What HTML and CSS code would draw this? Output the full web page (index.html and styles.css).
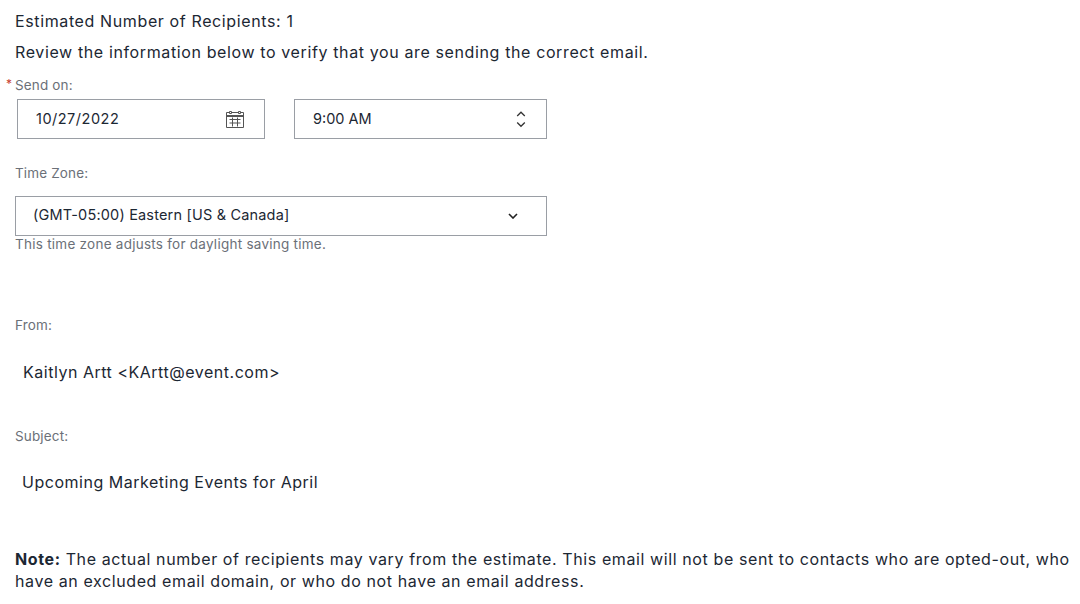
FILE: index.html
```html
<!DOCTYPE html>
<html lang="en">
<head>
<meta charset="utf-8">
<title>Review</title>
<link rel="stylesheet" href="styles.css">
</head>
<body>
<main class="page">
  <p class="line first">Estimated Number of Recipients: 1</p>
  <p class="line second">Review the information below to verify that you are sending the correct email.</p>
  <div class="label send-label"><span class="req">*</span>Send on:</div>
  <div class="row">
    <div class="box date"><span class="field-text date-text">10/27/2022</span>
      <svg class="cal" viewBox="0 0 18 18" width="18" height="18" fill="none" stroke="#555" stroke-width="1"><path d="M.5 2.5h17v15H.5z"/><path d="M.5 5.5h17M.5 6.5h17M3.5 9.5h11M3.5 13h11M6.5 7.5v9M11.5 7.5v9"/><path d="M3.5 1.5h2v2h-2zM12.5 1.5h2v2h-2z" fill="#fff"/></svg>
    </div>
    <div class="box time"><span class="field-text">9:00 AM</span>
      <svg class="updown" viewBox="0 0 10 18" width="10" height="18" fill="none" stroke="#333" stroke-width="1.3"><path d="M1.2 6l3.8-3.800L8.800 6M1.200 12.500l3.800 3.800 3.800-3.800"/></svg>
    </div>
  </div>
  <div class="label tz-label">Time Zone:</div>
  <div class="box zone"><span class="field-text zone-text">(GMT-05:00) Eastern [US &amp; Canada]</span>
    <svg viewBox="0 0 10 6" width="10" height="6" fill="none" stroke="#222" stroke-width="1.6"><path d="M1 1l4 4 4-4"/></svg>
  </div>
  <div class="hint">This time zone adjusts for daylight saving time.</div>
  <div class="label from-label">From:</div>
  <div class="value from-value">Kaitlyn Artt &lt;KArtt@event.com&gt;</div>
  <div class="label subject-label">Subject:</div>
  <div class="value subject-value">Upcoming Marketing Events for April</div>
  <p class="note"><strong>Note:</strong> The actual number of recipients may vary from the estimate. This email will not be sent to contacts who are opted-out, who have an excluded email domain, or who do not have an email address.</p>
</main>
</body>
</html>
```
FILE: styles.css
```css
html, body { margin: 0; padding: 0; background: #fff; }
body { font-family: Inter, "Noto Sans", sans-serif; color: #1c2733; font-size: 16px; overflow: hidden; }
.page { width: 1080px; height: 604px; padding: 0 0 0 15px; box-sizing: border-box; overflow: hidden; }
.line { margin: 0; line-height: 22px; letter-spacing: 0.62px; }
.first { padding-top: 10px; }
.second { padding-top: 9px; }
.label { font-size: 13.5px; line-height: 18px; color: #6b7078; letter-spacing: 0.15px; }
.send-label { margin-top: 13px; position: relative; }
.req { position: absolute; left: -9px; top: -1px; color: #c8402f; font-size: 12px; }
.row { display: flex; gap: 29px; margin: 5px 0 0 2px; }
.box { box-sizing: border-box; height: 40px; border: 1px solid #9a9ea5; display: flex; align-items: center; justify-content: space-between; font-size: 14.5px; }
.field-text { margin-bottom: 2px; }
.date-text { letter-spacing: 0.5px; }
.zone-text { margin-bottom: 4px; letter-spacing: 0.18px; }
.date { width: 248px; padding: 0 20px 0 18px; }
.time { width: 253px; padding: 0 20px 0 18px; }
.zone { width: 532px; padding: 0 28px 0 17px; margin-top: 14px; }
.tz-label { margin-top: 25px; }
.hint { font-size: 13.5px; line-height: 16px; color: #6b7078; letter-spacing: 0.25px; }
.from-label { margin-top: 64px; }
.value { font-size: 16px; line-height: 22px; letter-spacing: 0.52px; }
.from-value { margin: 27px 0 0 8px; }
.subject-label { margin-top: 44px; }
.subject-value { margin: 26px 0 0 7px; }
.note { margin: 55px 0 0; width: 1058px; line-height: 22px; letter-spacing: 0.6px; }
.note strong { font-weight: 700; }
```
